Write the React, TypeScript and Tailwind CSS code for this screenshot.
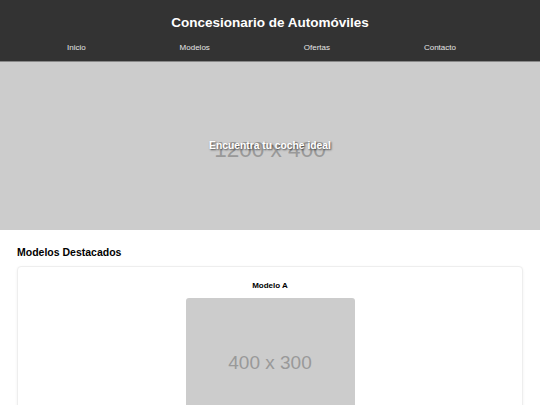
import React from "react";

export default function App() {
  const font = { fontFamily: '"Liberation Sans", Arial, sans-serif' };
  return (
    <div className="min-h-[405px] bg-white" style={font}>
      <header className="bg-[#333333] text-white border-b border-[#888888]">
        <h1 className="text-center font-bold text-[13.5px] leading-[20px] pt-[13px]">Concesionario de Automóviles</h1>
        <nav className="flex justify-between pl-[67px] pr-[84px] pt-[8px] pb-[6px] text-[8px] leading-[14px] text-[#e5e5e5]">
          <a>Inicio</a>
          <a>Modelos</a>
          <a>Ofertas</a>
          <a>Contacto</a>
        </nav>
      </header>
      <section className="relative h-[168px] bg-[#cccccc] flex items-center justify-center overflow-hidden">
        <span className="text-[#999999] text-[22.5px] leading-none mt-[8px]">1200 x 400</span>
        <div className="absolute inset-0 flex items-center justify-center">
          <h2 className="text-white text-[10.3px] font-semibold [text-shadow:1px_1px_2px_rgba(0,0,0,0.7)] mt-[0px]">Encuentra tu coche ideal</h2>
        </div>
      </section>
      <main className="px-[17px] pt-[14px]">
        <h2 className="font-bold text-[10.5px] leading-[16px] text-black">Modelos Destacados</h2>
        <div className="mt-[6px] rounded-[4px] border border-[#eeeeee] shadow-[0_1px_3px_rgba(0,0,0,0.06)] bg-white flex flex-col items-center pt-[12px]">
          <h3 className="font-bold text-[8px] leading-[14px] text-black">Modelo A</h3>
          <div className="mt-[5px] w-[169px] h-[127px] rounded-[3px] bg-[#cccccc] flex items-center justify-center">
            <span className="text-[#999999] text-[19px] mt-[4px]">400 x 300</span>
          </div>
        </div>
      </main>
    </div>
  );
}
